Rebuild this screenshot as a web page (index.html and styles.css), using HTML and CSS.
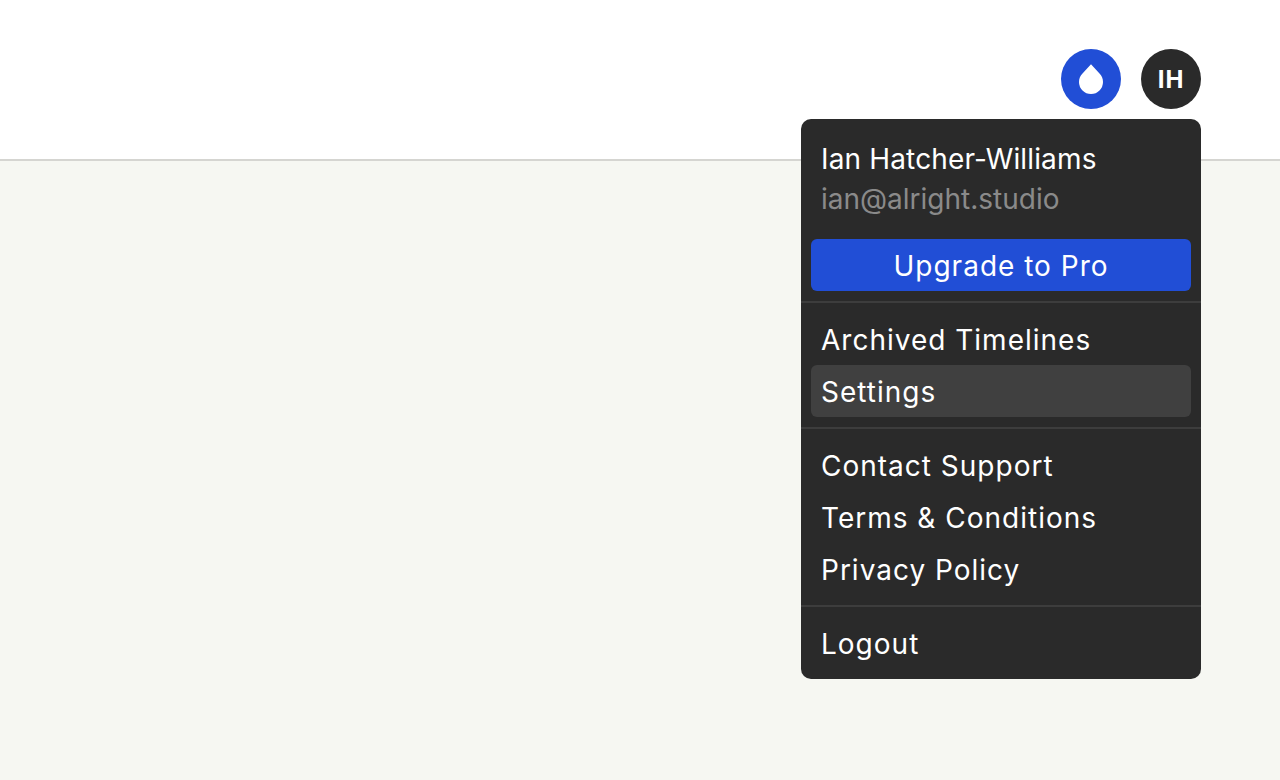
FILE: index.html
```html
<!DOCTYPE html>
<html lang="en">
<head>
<meta charset="utf-8">
<title>Account menu</title>
<link rel="stylesheet" href="styles.css">
</head>
<body>
<header class="topbar">
  <div class="topbar-actions">
    <button class="circle circle-blue" aria-label="Drop">
      <svg class="drop" viewBox="0 0 24 30" width="24" height="30"><path d="M12 0.3 L3.5 9.5 C1.3 11.7 0 14.7 0 18 A12 12 0 0 0 24 18 C24 14.7 22.7 11.7 20.5 9.5 Z" fill="#fff"/></svg>
    </button>
    <button class="circle circle-dark">IH</button>
  </div>
  <nav class="menu">
    <section class="menu-section">
      <div class="user">
        <div class="user-name">Ian Hatcher-Williams</div>
        <div class="user-email">ian@alright.studio</div>
      </div>
      <a class="upgrade">Upgrade to Pro</a>
    </section>
    <section class="menu-section">
      <a class="item">Archived Timelines</a>
      <a class="item item-active">Settings</a>
    </section>
    <section class="menu-section">
      <a class="item">Contact Support</a>
      <a class="item">Terms &amp; Conditions</a>
      <a class="item">Privacy Policy</a>
    </section>
    <section class="menu-section">
      <a class="item">Logout</a>
    </section>
  </nav>
</header>
</body>
</html>
```

FILE: styles.css
```css
* { box-sizing: border-box; }
html, body { height: 100%; }
body {
  margin: 0;
  background: #f6f7f2;
  font-family: Inter, "Liberation Sans", sans-serif;
  overflow: hidden;
}
.topbar {
  position: relative;
  height: 161px;
  background: #fff;
  border-bottom: 2px solid #d5d5d1;
}
.topbar-actions {
  display: flex;
  justify-content: flex-end;
  gap: 20px;
  padding: 49px 79px 0 0;
}
.circle {
  width: 60px;
  height: 60px;
  border: 0;
  padding: 0;
  border-radius: 50%;
  display: flex;
  align-items: center;
  justify-content: center;
  color: #fff;
  font: 700 24px Inter, "Liberation Sans", sans-serif;
  letter-spacing: 1px;
}
.circle-blue { background: #214ed6; }
.circle-dark { background: #2a2a2a; }
.menu {
  position: absolute;
  top: 119px;
  left: 801px;
  width: 400px;
  background: #2a2a2a;
  border-radius: 10px;
  color: #fff;
  font-size: 28px;
  overflow: hidden;
}
.menu-section {
  display: flex;
  flex-direction: column;
  padding: 10px;
  border-bottom: 2px solid #3d3d3d;
}
.menu-section:last-child { border-bottom: 0; }
.user { padding: 10px 10px 20px; }
.user-name, .user-email { line-height: 40px; white-space: nowrap; }
.user-name { letter-spacing: 0.15px; }
.user-email { color: #8a8a8a; }
.upgrade {
  height: 52px;
  line-height: 52px;
  padding-top: 1px;
  text-align: center;
  background: #214ed6;
  border-radius: 6px;
  letter-spacing: 1px;
}
.item {
  height: 52px;
  line-height: 52px;
  padding: 1px 10px 0;
  border-radius: 6px;
  letter-spacing: 1px;
  white-space: nowrap;
}
.item-active { background: #404040; }
```
